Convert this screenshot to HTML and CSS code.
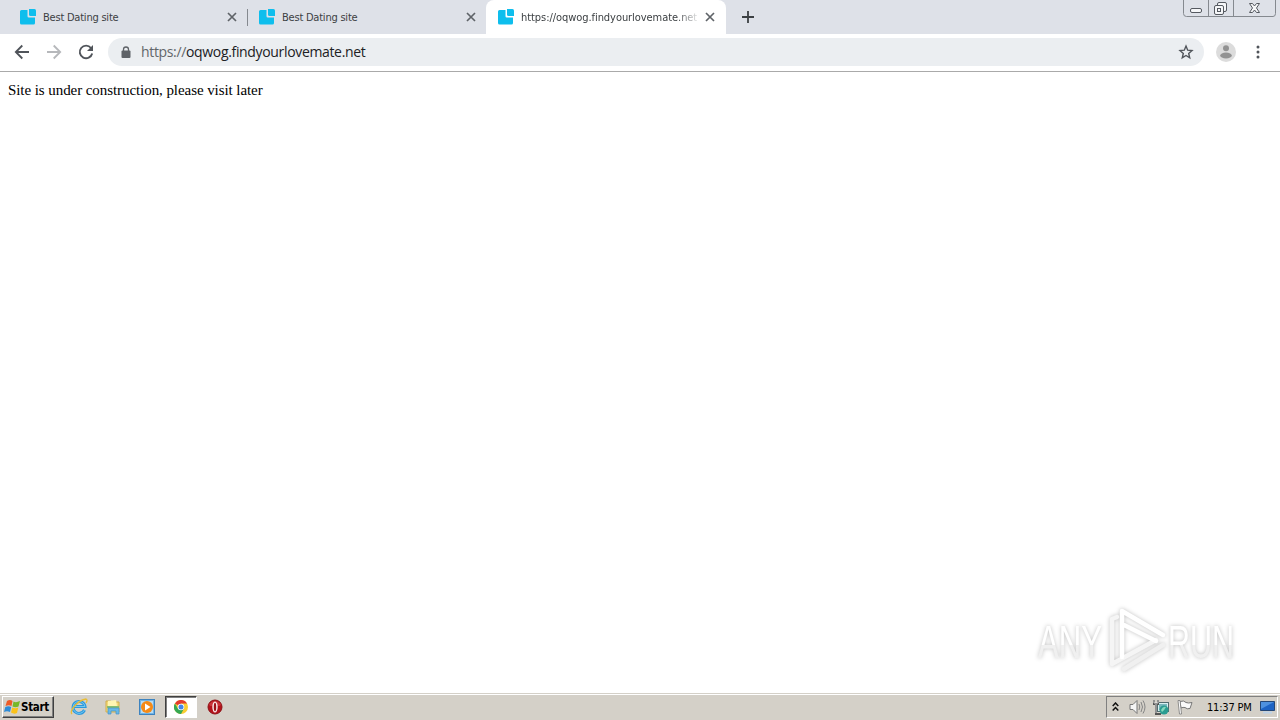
FILE: index.html
```html
<!DOCTYPE html>
<html lang="en">
<head>
  <meta charset="UTF-8" />
  <meta name="viewport" content="width=device-width, initial-scale=1.0" />
  <title>Desktop</title>
  <link rel="stylesheet" href="styles.css">
</head>
<body>
  <!-- Shared icons -->
  <svg class="defs" width="0" height="0">
    <symbol id="favicon" viewBox="0 0 16 16">
      <path d="M1.5 1H7.5V7.3Q7.5 8.5 8.7 8.5H15V14Q15 15.5 13.5 15.5H1.5Q0 15.5 0 14V2.5Q0 1 1.5 1Z" />
      <path d="M9 0H14.5Q16 0 16 1.5V7H10.5Q9 7 9 5.5Z" />
    </symbol>
    <symbol id="close" viewBox="0 0 10 10">
      <path d="M1 1L9 9M9 1L1 9" fill="none" stroke="#5f6368" stroke-width="1.7" />
    </symbol>
  </svg>

  <div class="tab-strip">
    <div class="tab">
      <svg class="favicon"><use href="#favicon" /></svg>
      <span class="tab-title">Best Dating site</span>
      <svg class="tab-close"><use href="#close" /></svg>
    </div>
    <div class="tab divided">
      <svg class="favicon"><use href="#favicon" /></svg>
      <span class="tab-title">Best Dating site</span>
      <svg class="tab-close"><use href="#close" /></svg>
    </div>
    <div class="tab active">
      <svg class="favicon"><use href="#favicon" /></svg>
      <span class="tab-title long">https://oqwog.findyourlovemate.net</span>
      <svg class="tab-close"><use href="#close" /></svg>
    </div>
    <svg class="new-tab" viewBox="0 0 12 12"><path d="M6 0V12M0 6H12" stroke="#3c4043" stroke-width="1.8" /></svg>
    <svg class="window-buttons" width="94" height="18" viewBox="0 0 94 18">
      <path d="M.5 0V13.5Q.5 16.5 3.5 16.5H90Q92.5 16.5 92.5 13.5V0M25.5 0V16.5M50.5 0V16.5" fill="none" stroke="#85898f" />
      <g fill="#f5f6f8" stroke="#555960">
        <rect x="7.5" y="8.5" width="11" height="4" rx="1.5" />
        <rect x="34.5" y="2.5" width="9" height="9" rx="1.5" />
        <rect x="31.5" y="5.5" width="9" height="9" rx="1.5" />
        <rect x="34.5" y="8.5" width="3" height="3" />
        <path d="M66.5 3.500H69.500L71.500 6L73.500 3.500H76.500L73.500 8L76.500 12.500H73.500L71.500 10L69.500 12.500H66.500L69.500 8Z" />
      </g>
    </svg>
  </div>

  <div class="toolbar">
    <svg class="tool" viewBox="0 0 16 16"><path d="M15 8H2M8.3 1.5L1.8 8L8.3 14.5" fill="none" stroke="#50545a" stroke-width="1.8" /></svg>
    <svg class="tool" viewBox="0 0 16 16"><path d="M1 8H14M7.7 1.5L14.2 8L7.7 14.5" fill="none" stroke="#b6b8bb" stroke-width="1.8" /></svg>
    <svg class="tool" viewBox="0 0 16 16">
      <path d="M13 4A6.300 6.300 0 1 0 14.200 9.500" fill="none" stroke="#50545a" stroke-width="1.9" />
      <path d="M15 1V7H9Z" fill="#50545a" />
    </svg>
    <div class="omnibox">
      <svg class="lock" viewBox="0 0 10 13">
        <rect x=".5" y="4.5" width="9" height="7.500" rx="1" fill="#5f6368" />
        <path d="M2.500 5V3.500a2.500 2.500 0 0 1 5 0V5" fill="none" stroke="#5f6368" stroke-width="1.300" />
      </svg>
      <span class="url"><span class="scheme">https://</span>oqwog.findyourlovemate.net</span>
      <svg class="star" viewBox="0 0 16 16"><path d="M8 2L9.700 6.200L14 6.600L10.700 9.500L11.700 13.800L8 11.500L4.300 13.800L5.300 9.500L2 6.600L6.300 6.200Z" fill="none" stroke="#50545a" stroke-width="1.400" /></svg>
    </div>
    <svg class="avatar" viewBox="0 0 20 20">
      <circle cx="10" cy="10" r="10" fill="#dcdcdc" />
      <circle cx="10" cy="6.300" r="3" fill="#929292" />
      <ellipse cx="10" cy="13.500" rx="5.800" ry="3" fill="#929292" />
    </svg>
    <svg class="menu" viewBox="0 0 4 14"><g fill="#50545a"><circle cx="2" cy="2" r="1.500" /><circle cx="2" cy="7" r="1.500" /><circle cx="2" cy="12" r="1.500" /></g></svg>
  </div>

  <div class="page">
    <p class="message">Site is under construction, please visit later</p>
    <svg class="watermark" width="220" height="72" viewBox="0 0 220 72">
      <defs>
        <linearGradient id="fade" x1="0" y1="0" x2="0" y2="1">
          <stop offset=".55" stop-color="#fff" />
          <stop offset=".56" stop-color="#f0f0f0" />
        </linearGradient>
      </defs>
      <g class="brand" fill="url(#fade)">
        <text x="6" y="54" textLength="64" lengthAdjust="spacingAndGlyphs">ANY</text>
        <text x="136" y="54" textLength="66" lengthAdjust="spacingAndGlyphs">RUN</text>
      </g>
      <!-- Folded ribbon in the shape of a play button -->
      <g class="mark" fill="none">
        <path d="M92 65L131 41" stroke="#f0f0f0" />
        <path d="M85 13L80 15V60L124 36" stroke="#f5f5f5" />
        <path d="M90 53V7L131 31M92 21L124 37" stroke="#fff" />
      </g>
    </svg>
  </div>

  <div class="taskbar">
    <div class="start">
      <svg width="17" height="16" viewBox="0 0 17 16">
        <path d="M3 2Q6 0 8.500 2L7.500 7Q5 5.500 1.500 7Z" fill="#ed5b27" />
        <path d="M9.500 2.500Q12 4 16 2L14.500 7.500Q11.500 9 8.500 7.500Z" fill="#76b82a" />
        <path d="M1.300 8Q4.500 6.500 7.200 8L6 13Q3 11.500 0 13Z" fill="#2d8bd7" />
        <path d="M8.300 8.500Q11.500 10 14.300 8.500L13 14Q10 15.500 7 13.500Z" fill="#fbc21a" />
      </svg>
      <span>Start</span>
    </div>
    <div class="launch">
      <div class="task">
        <svg width="18" height="18" viewBox="0 0 18 18">
          <path d="M14.500 12A6 6 0 1 1 15 8.500H4" fill="none" stroke="#2c98dc" stroke-width="3" />
          <path d="M14.500 12A6 6 0 1 1 15 8.500H4" fill="none" stroke="#72c9f3" stroke-width="1" />
          <path d="M2 16C-1 13 8 2 16 1Q18 2 16 5" fill="none" stroke="#e9bd35" stroke-width="1.300" />
        </svg>
      </div>
      <div class="task">
        <svg width="16" height="16" viewBox="0 0 16 16">
          <path d="M1 2H6L7 3H14V13H1Z" fill="#f3d979" stroke="#d0ad4f" />
          <path d="M3 2L11 1L12 7H3Z" fill="#fff5b3" />
          <path d="M2 7H14V9H2Z" fill="#85bd71" />
          <path d="M3 15V9H14V15H11V12H6V15Z" fill="#69b8e7" stroke="#4294c9" stroke-width=".7" />
        </svg>
      </div>
      <div class="task">
        <svg width="16" height="16" viewBox="0 0 16 16">
          <rect x=".5" y=".5" width="15" height="15" fill="#70b4e6" stroke="#3d83bf" />
          <rect x="2" y="2" width="12" height="12" fill="#b9dcf3" />
          <circle cx="8" cy="8" r="6" fill="#f58a16" />
          <path d="M6 4.500L11.500 8L6 11.500Z" fill="#fff" />
        </svg>
      </div>
      <div class="task pressed">
        <svg width="14" height="14" viewBox="0 0 14 14">
          <circle cx="7" cy="7" r="7" fill="#f9cd32" />
          <path d="M7 7L.9 3.500A7 7 0 0 1 13.100 3.500H7Z" fill="#e33b2e" />
          <path d="M.9 3.500A7 7 0 0 0 7 14L10 8.500L7 7L4 8.700Z" fill="#35a853" />
          <circle cx="7" cy="7" r="3.300" fill="#fff" />
          <circle cx="7" cy="7" r="2.500" fill="#4285e8" />
        </svg>
      </div>
      <div class="task">
        <svg width="16" height="16" viewBox="0 0 16 16">
          <circle cx="8" cy="8" r="7" fill="#b5121b" stroke="#8c1015" />
          <path d="M2 5Q8 -1 14 5L13 7H3Z" fill="#d94b50" opacity=".6" />
          <ellipse cx="8" cy="8" rx="2.700" ry="5.500" fill="#f8e9e9" />
          <ellipse cx="8" cy="8" rx="1.200" ry="4.300" fill="#9c1016" />
        </svg>
      </div>
    </div>
    <div class="tray">
      <svg width="7" height="10" viewBox="0 0 7 10"><path d="M.7 4L3.500 1L6.300 4M.7 8.500L3.500 5.500L6.300 8.500" fill="none" stroke="#111" stroke-width="1.500" /></svg>
      <svg class="sound" width="17" height="16" viewBox="0 0 17 16">
        <path d="M1 5.500H4L8 1.500V14.500L4 10.500H1Z" fill="#f5f5f5" stroke="#777" />
        <path d="M10 5Q11.500 8 10 11M12 3Q15 8 12 13M14 1.500Q18 8 14 14.500" fill="none" stroke="#858585" />
      </svg>
      <svg class="network" width="17" height="16" viewBox="0 0 17 16">
        <rect x="4.500" y="3.500" width="11" height="9" fill="#d8eff0" stroke="#536c70" />
        <rect x="6" y="5" width="8" height="6" fill="#78b8bd" />
        <path d="M1 1V5H5V1M3 5V15H8" fill="none" stroke="#555" stroke-width="2" />
        <path d="M1 1V4H5V1M3 5V14" fill="none" stroke="#eee" stroke-width=".8" />
        <circle cx="11" cy="11" r="4.500" fill="#2a9c91" />
        <path d="M8 11Q10 7 13 8Q11 12 9 13Z" fill="#86d8bc" />
      </svg>
      <svg class="flag" width="17" height="16" viewBox="0 0 17 16">
        <path d="M3 2.500Q7 1 9 3.500Q11 4.500 15 3.500L13 9.500Q10 10.500 8 8.500Q6 8 4 9Z" fill="#fafafa" stroke="#777" />
        <path d="M1 1.500H3L4.500 15H2.500Z" fill="#fff" stroke="#777" stroke-width=".8" />
      </svg>
      <span class="clock">11:37 PM</span>
      <svg class="desktop" width="16" height="14" viewBox="0 0 16 14">
        <path d="M.5 1.500H14.500V10.500H.5Z" fill="#1d63c4" stroke="#254776" />
        <path d="M1 2H14L1 9Z" fill="#4e91df" />
        <path d="M3 12.500H12" stroke="#bed3e8" stroke-width="2" />
      </svg>
    </div>
  </div>
</body>
</html>
```
FILE: styles.css
```css
* {
  box-sizing: border-box;
}
body {
  margin: 0;
  height: 720px;
  display: flex;
  flex-direction: column;
  overflow: hidden;
  background: #fff;
  font-family: "DejaVu Sans Condensed", "DejaVu Sans", sans-serif;
}
svg {
  display: block;
  flex-shrink: 0;
}
.defs {
  position: absolute;
}

/* Tabs */
.tab-strip {
  display: flex;
  height: 34px;
  padding-left: 8px;
  background: #dee1e8;
}
.tab {
  display: flex;
  align-items: center;
  width: 239px;
  padding: 0 10px 0 12px;
}
.tab.divided {
  background: linear-gradient(#85898f, #85898f) 0 9px / 1px 17px no-repeat;
}
.tab.active {
  width: 240px;
  background: #fff;
  border-radius: 8px 8px 0 0;
}
.favicon {
  width: 16px;
  height: 16px;
  margin-right: 7px;
  fill: #0ebeed;
}
.tab-title {
  flex: 1;
  overflow: hidden;
  white-space: nowrap;
  padding-top: 1px;
  font-size: 11px;
  line-height: 16px;
  letter-spacing: -0.22px;
  color: #3c4043;
}
.tab-title.long {
  flex: 0 0 176px;
  margin-right: 8px;
  letter-spacing: -0.06px;
  mask-image: linear-gradient(to right, #000 155px, transparent 180px);
}
.tab-close {
  width: 10px;
  height: 10px;
}
.new-tab {
  width: 12px;
  height: 12px;
  margin: 11px 0 0 16px;
}
.window-buttons {
  margin-left: auto;
  margin-right: 3px;
}

/* Address bar */
.toolbar {
  display: flex;
  align-items: center;
  height: 38px;
  padding: 0 20px 1px 14px;
  border-bottom: 1px solid #aaa;
}
.tool {
  width: 16px;
  height: 16px;
  margin-right: 16px;
}
.omnibox {
  display: flex;
  align-items: center;
  width: 1096px;
  height: 28px;
  margin-left: -2px;
  padding: 0 10px 0 13px;
  border-radius: 14px;
  background: #ebeef1;
}
.lock {
  width: 10px;
  height: 13px;
  margin-right: 10px;
}
.url {
  flex: 1;
  padding-bottom: 2px;
  font-family: "Open Sans", sans-serif;
  font-size: 14px;
  letter-spacing: -0.34px;
  color: #202124;
}
.scheme {
  color: #62666a;
}
.star {
  width: 16px;
  height: 16px;
}
.avatar {
  width: 20px;
  height: 20px;
  margin-left: 12px;
}
.menu {
  width: 4px;
  height: 14px;
  margin-left: auto;
}

/* Page */
.page {
  flex: 1;
  display: flex;
  flex-direction: column;
  justify-content: space-between;
}
.message {
  margin: 9px 8px 0;
  font: 15px/18px "Liberation Serif", serif;
  letter-spacing: -0.07px;
  color: #000;
}
.watermark {
  align-self: flex-end;
  margin: 0 28px 17px 0;
  filter: drop-shadow(0 0 2px rgba(0, 0, 0, 0.25));
}
.brand {
  font-family: "Liberation Sans", sans-serif;
  font-size: 46px;
}
.mark {
  stroke-width: 4.5;
  stroke-linejoin: round;
  stroke-linecap: round;
}

/* Taskbar */
.taskbar {
  display: flex;
  height: 27px;
  padding: 1px 2px 2px;
  border-top: 1px solid #d4d0c8;
  box-shadow: inset 0 1px #fff;
  background: #d4d0c8;
}
.start {
  display: flex;
  align-items: center;
  width: 52px;
  height: 22px;
  margin-top: 1px;
  padding-left: 1px;
  border: 1px solid;
  border-color: #fff #404040 #404040 #fff;
  box-shadow: inset -1px -1px #808080;
  font-size: 11.5px;
  font-weight: bold;
  letter-spacing: -0.3px;
  color: #000;
}
.launch {
  display: flex;
  margin-left: 9px;
}
.task {
  display: flex;
  align-items: center;
  justify-content: center;
  width: 32px;
  height: 22px;
  margin: 1px 2px 0 0;
}
.task.pressed {
  border: 1px solid;
  border-color: #404040 #fff #fff #404040;
  box-shadow: inset 1px 1px #808080;
  background: #fff;
}
.tray {
  display: flex;
  align-items: center;
  width: 172px;
  height: 22px;
  margin: 1px 0 0 auto;
  padding-left: 5px;
  border: 1px solid;
  border-color: #808080 #fff #fff #808080;
}
.sound {
  margin-left: 10px;
}
.network {
  margin-left: 7px;
}
.flag {
  margin-left: 7px;
}
.clock {
  width: 46px;
  margin-left: 13px;
  white-space: nowrap;
  font-size: 11px;
  letter-spacing: -0.2px;
  color: #000;
}
.desktop {
  margin-left: 7px;
}
```
